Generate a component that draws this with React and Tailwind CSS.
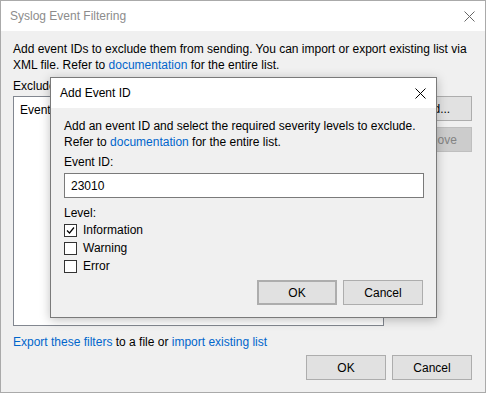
import { useState } from "react";

const font = { fontFamily: '"Segoe UI", "Liberation Sans", Arial, sans-serif' };

function Close({ color = "#000", size = 11 }) {
  return (
    <svg width={size} height={size} viewBox="0 0 11 11">
      <path d="M0.5 0.5 L10.5 10.5 M10.5 0.5 L0.5 10.5" stroke={color} strokeWidth="1" />
    </svg>
  );
}

function Button({ children, primary, disabled, wide = true }) {
  return (
    <button
      className={
        "h-[25px] shrink-0 text-[12px] flex items-center justify-center " +
        (wide ? "w-[80px] " : "w-[75px] ") +
        (primary ? "border-2 border-[#0078d7] " : "border ") +
        (disabled
          ? "bg-[#cccccc] border-[#bfbfbf] text-[#838383]"
          : "bg-[#e1e1e1] border-[#adadad] text-black")
      }
    >
      {children}
    </button>
  );
}

function Check({ label, checked }) {
  return (
    <label className="h-[18px] flex items-center gap-[6px]">
      <span className="w-[13px] h-[13px] border border-[#333] bg-white flex items-center justify-center">
        {checked && (
          <svg width="9" height="9" viewBox="0 0 9 9">
            <path d="M1 4.5 L3.5 7 L8 1.5" stroke="#000" strokeWidth="1.2" fill="none" />
          </svg>
        )}
      </span>
      <span>{label}</span>
    </label>
  );
}

export default function App() {
  const [id, setId] = useState("23010");

  return (
    <div
      className="relative w-[486px] h-[393px] border border-[#aaaaaa] bg-[#f0f0f0] flex flex-col text-[12px] text-black"
      style={font}
    >
      <div className="h-[30px] bg-white flex items-center justify-between pl-[9px] pr-[10px]">
        <span className="text-[#8c8c8c] text-[12px]">Syslog Event Filtering</span>
        <Close color="#666" size={11} />
      </div>

      <div className="flex flex-col px-[12px] pt-[10px]">
        <p className="leading-[16px]">
          Add event IDs to exclude them from sending. You can import or export existing list via
          XML file. Refer to <a className="text-[#0066cc]">documentation</a> for the entire list.
        </p>
        <div className="mt-[5px] leading-[16px]">Excluded events:</div>
        <div className="mt-[2px] flex gap-[13px]">
          <div className="w-[371px] shrink-0 h-[230px] bg-white border border-[#828790] px-[6px] pt-[5px] leading-[16px]">
            Event ID
          </div>
          <div className="flex flex-col gap-[6px]">
            <Button wide={false}>Add...</Button>
            <Button wide={false} disabled>
              Remove
            </Button>
          </div>
        </div>
        <div className="mt-[8px] leading-[16px]">
          <a className="text-[#0066cc]">Export these filters</a> to a file or{" "}
          <a className="text-[#0066cc]">import existing list</a>
        </div>
        <div className="mt-[5px] flex justify-end gap-[6px] pr-[1px]">
          <Button>OK</Button>
          <Button>Cancel</Button>
        </div>
      </div>

      <div className="absolute left-[49px] top-[76px] w-[387px] h-[241px] border border-[#7a7a7a] bg-[#f0f0f0] flex flex-col shadow-[0_2px_10px_rgba(0,0,0,0.25)]">
        <div className="h-[30px] bg-white flex items-center justify-between pl-[9px] pr-[10px]">
          <span className="text-[12px]">Add Event ID</span>
          <Close color="#000" size={11} />
        </div>
        <div className="flex flex-col px-[13px] pt-[10px] leading-[16px]">
          <p>
            Add an event ID and select the required severity levels to exclude.
            <br />
            Refer to <a className="text-[#0066cc]">documentation</a> for the entire list.
          </p>
          <div className="mt-[4px]">Event ID:</div>
          <input
            value={id}
            onChange={(e) => setId(e.target.value)}
            className="mt-[3px] w-[360px] h-[25px] bg-white border border-[#7a7a7a] px-[6px] outline-none text-[12px]"
          />
          <div className="mt-[7px]">Level:</div>
          <Check label="Information" checked />
          <Check label="Warning" />
          <Check label="Error" />
          <div className="mt-[5px] flex justify-end gap-[6px]">
            <Button primary>OK</Button>
            <Button>Cancel</Button>
          </div>
        </div>
      </div>
    </div>
  );
}
